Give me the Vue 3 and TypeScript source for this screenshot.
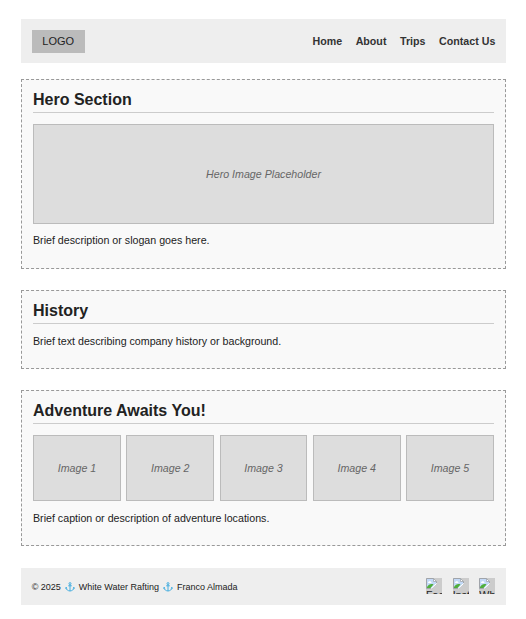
<script setup lang="ts">
const links: string[] = ['Home', 'About', 'Trips', 'Contact Us']
const images: number[] = [1, 2, 3, 4, 5]
const socials: string[] = ['Facebook', 'Instagram', 'WhatsApp']
</script>

<template>
  <div class="page">
    <header class="header">
      <div class="logo">LOGO</div>
      <nav class="nav">
        <a v-for="link in links" :key="link">{{ link }}</a>
      </nav>
    </header>

    <section class="section hero">
      <h2>Hero Section</h2>
      <div class="placeholder hero-image">Hero Image Placeholder</div>
      <p>Brief description or slogan goes here.</p>
    </section>

    <section class="section history">
      <h2>History</h2>
      <p>Brief text describing company history or background.</p>
    </section>

    <section class="section adventure">
      <h2>Adventure Awaits You!</h2>
      <div class="gallery">
        <div v-for="n in images" :key="n" class="placeholder">Image {{ n }}</div>
      </div>
      <p>Brief caption or description of adventure locations.</p>
    </section>

    <footer class="footer">
      <div class="credits">
        <span>© 2025</span>
        <svg class="anchor" viewBox="0 0 10 10"><path d="M5 2.600V9M3.200 3.800h3.600M1 5.600C1.200 7.800 3 8.800 5 9c2-.2 3.800-1.200 4-3.400M.5 6.500l.6-1.200 1 .9M9.500 6.500l-.6-1.200-1 .9" /><circle cx="5" cy="1.600" r="1" /></svg>
        <span>White Water Rafting</span>
        <svg class="anchor" viewBox="0 0 10 10"><path d="M5 2.600V9M3.200 3.800h3.600M1 5.600C1.200 7.800 3 8.800 5 9c2-.2 3.800-1.200 4-3.400M.5 6.500l.6-1.200 1 .9M9.500 6.500l-.6-1.200-1 .9" /><circle cx="5" cy="1.600" r="1" /></svg>
        <span>Franco Almada</span>
      </div>
      <div class="socials">
        <div v-for="name in socials" :key="name" class="social">
          <svg class="broken" viewBox="0 0 11 11">
            <path d="M.5 .5h7l3 3v7h-10z" fill="#c3d9f7" stroke="#a0a4aa" />
            <path d="M7.500 .5v3h3z" fill="#fff" stroke="#a0a4aa" stroke-width=".8" />
            <path d="M2 5c0-2.400 3.500-2.400 3.500 0z" fill="#fff" />
            <path d="M1 10V9c1.500-2.500 4-3.500 6.500-2.500L4.500 10z" fill="#4fae3c" />
            <path d="M5.500 11L11 5.500V11z" fill="#ccc" />
            <path d="M4.800 10.800l6-5.500" stroke="#fff" />
          </svg>
          <span>{{ name }}</span>
        </div>
      </div>
    </footer>
  </div>
</template>

<style>
body {
  background: #fff;
}
</style>

<style scoped>
.page {
  padding: 19px 20px 14px 21px;
  color: #222;
  font-family: "Liberation Sans", Arial, sans-serif;
  font-size: 10.667px;
}
.header {
  display: flex;
  align-items: center;
  justify-content: space-between;
  box-sizing: border-box;
  height: 44px;
  padding: 0 10.667px;
  background: #eee;
}
.logo {
  box-sizing: border-box;
  height: 23px;
  padding: 0 10.667px;
  font-size: 11px;
  line-height: 23px;
  background: #bbb;
}
.nav {
  display: flex;
  gap: 13.600px;
  color: #333;
  font-weight: bold;
}
.section {
  box-sizing: border-box;
  padding: 10px 11px;
  border: 1px dashed #999;
  background: #f9f9f9;
}
.hero {
  height: 190px;
  margin-top: 16px;
}
.history {
  height: 79px;
  margin-top: 21px;
}
.adventure {
  height: 156px;
  margin-top: 21px;
}
h2 {
  box-sizing: border-box;
  height: 23px;
  margin: 0 0 11px;
  border-bottom: 1px solid #ccc;
  font-size: 16px;
  line-height: 19px;
}
p {
  margin: 11px 0 0;
  line-height: 12px;
}
.hero p {
  margin-top: 10px;
}
.placeholder {
  display: flex;
  align-items: center;
  justify-content: center;
  box-sizing: border-box;
  border: 1px solid #bbb;
  background: #ddd;
  color: #666;
  font-style: italic;
}
.hero-image {
  height: 100px;
}
.gallery {
  display: grid;
  grid-template-columns: repeat(5, 1fr);
  gap: 5.333px;
  height: 66px;
}
.footer {
  display: flex;
  align-items: center;
  justify-content: space-between;
  box-sizing: border-box;
  height: 37px;
  margin-top: 22px;
  padding: 0 10.667px 1px;
  background: #eee;
  font-size: 9px;
}
.credits {
  display: flex;
  align-items: center;
  padding-top: 1px;
}
.anchor {
  width: 10px;
  height: 10px;
  margin: 0 4px;
  fill: none;
  stroke: #45aee0;
}
.socials {
  display: flex;
  gap: 10.667px;
}
.social {
  display: flex;
  flex-direction: column;
  width: 16px;
  height: 16px;
  overflow: hidden;
  background: #ccc;
}
.broken {
  flex: none;
  width: 11px;
  height: 11px;
}
.social span {
  font-size: 10.667px;
  line-height: 12px;
}
</style>
